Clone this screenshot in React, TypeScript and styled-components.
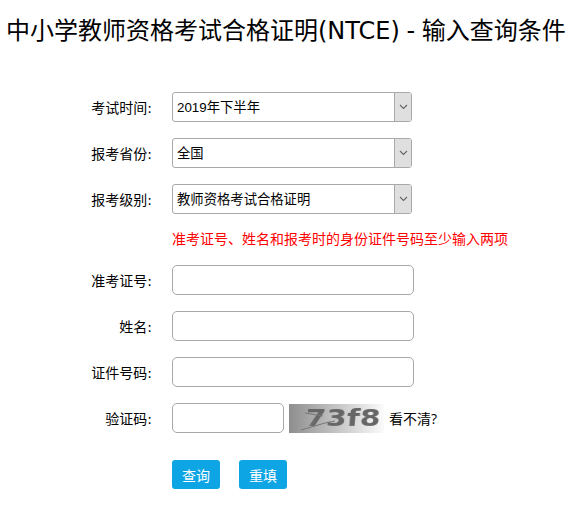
import styled, { createGlobalStyle } from "styled-components";

const GlobalStyle = createGlobalStyle`
  html, body {
    margin: 0;
    padding: 0;
    background: #fff;
    font-family: "Open Sans", "Noto Sans CJK SC", sans-serif;
    color: #000;
  }
`;

const selects = [
  { label: "考试时间:", value: "2019年下半年" },
  { label: "报考省份:", value: "全国" },
  { label: "报考级别:", value: "教师资格考试合格证明" },
];

const inputs = ["准考证号:", "姓名:", "证件号码:"];

const App = () => {
  return (
    <Page>
      <GlobalStyle />
      <Title>中小学教师资格考试合格证明(NTCE) - 输入查询条件</Title>
      <Form>
        {selects.map((item) => (
          <Row key={item.label}>
            <Label>{item.label}</Label>
            <SelectBox>
              <SelectValue>{item.value}</SelectValue>
              <ArrowBox>
                <svg width="9" height="6" viewBox="0 0 9 6">
                  <path d="M1 1l3.5 3.5L8 1" fill="none" stroke="#666" strokeWidth="1.1" />
                </svg>
              </ArrowBox>
            </SelectBox>
          </Row>
        ))}
        <Hint>准考证号、姓名和报考时的身份证件号码至少输入两项</Hint>
        {inputs.map((label) => (
          <Row key={label}>
            <Label>{label}</Label>
            <TextInput />
          </Row>
        ))}
        <Row>
          <Label>验证码:</Label>
          <CodeInput />
          <Captcha>
            <CaptchaText>73f8</CaptchaText>
            <CaptchaNoise width="95" height="29" viewBox="0 0 95 29">
              <path d="M16 9l18 3M12 26l24-7 10-2M22 21l4-5" fill="none" stroke="#777" strokeWidth="1" />
            </CaptchaNoise>
          </Captcha>
          <Refresh>看不清?</Refresh>
        </Row>
        <Buttons>
          <ActionButton>查询</ActionButton>
          <ActionButton>重填</ActionButton>
        </Buttons>
      </Form>
    </Page>
  );
};

const Page = styled.div`
  width: 588px;
  height: 514px;
  overflow: hidden;
`;
const Title = styled.h1`
  margin: 0;
  padding: 14px 0 0 6px;
  height: 92px;
  box-sizing: border-box;
  font-family: "DejaVu Sans", "Noto Sans CJK SC", sans-serif;
  font-size: 24px;
  line-height: 34px;
  font-weight: 400;
  word-spacing: -1px;
  white-space: nowrap;
`;
const Form = styled.div`
  display: flex;
  flex-direction: column;
  gap: 16px;
`;
const Row = styled.div`
  display: flex;
  align-items: center;
  height: 30px;
`;
const Label = styled.span`
  width: 152px;
  margin-right: 20px;
  text-align: right;
  font-family: "DejaVu Sans", "Noto Sans CJK SC", sans-serif;
  font-size: 14px;
  color: #000;
`;
const SelectBox = styled.div`
  width: 240px;
  height: 30px;
  box-sizing: border-box;
  display: flex;
  border: 1px solid #a9a9a9;
  border-radius: 3px;
  overflow: hidden;
`;
const SelectValue = styled.div`
  flex: 1;
  padding-left: 4px;
  font-family: "Liberation Sans", "Noto Sans CJK SC", sans-serif;
  font-size: 13.33px;
  line-height: 29px;
`;
const ArrowBox = styled.div`
  width: 16px;
  display: flex;
  align-items: center;
  justify-content: center;
  background: #dfdfdf;
  border-left: 1px solid #a9a9a9;
`;
const Hint = styled.div`
  height: 16px;
  margin: 0 0 3px 172px;
  font-size: 14px;
  line-height: 18px;
  color: #f00;
  white-space: nowrap;
`;
const TextInput = styled.input`
  width: 242px;
  height: 30px;
  padding: 0;
  box-sizing: border-box;
  border: 1px solid #a9a9a9;
  border-radius: 5px;
  background: #fff;
`;
const CodeInput = styled(TextInput)`
  width: 112px;
`;
const Captcha = styled.div`
  position: relative;
  width: 95px;
  height: 29px;
  margin-left: 5px;
  display: flex;
  align-items: center;
  justify-content: center;
  overflow: hidden;
  background: linear-gradient(90deg, #8e8e8e, #fbfbfb);
`;
const CaptchaText = styled.span`
  margin-left: 14px;
  font-family: "DejaVu Sans", sans-serif;
  font-size: 23px;
  font-weight: 700;
  line-height: 29px;
  color: #666;
  transform: skewX(-5deg) scaleX(1.3);
  filter: blur(0.4px);
`;
const CaptchaNoise = styled.svg`
  position: absolute;
  left: 0;
  top: 0;
`;
const Refresh = styled.span`
  margin-left: 5px;
  font-size: 14px;
`;
const Buttons = styled.div`
  display: flex;
  gap: 19px;
  margin: 11px 0 0 172px;
`;
const ActionButton = styled.button`
  width: 48px;
  height: 29px;
  padding: 0;
  border: 0;
  border-radius: 3px;
  background: #0ea5e4;
  color: #fff;
  font-family: inherit;
  font-size: 14px;
`;

export default App;
